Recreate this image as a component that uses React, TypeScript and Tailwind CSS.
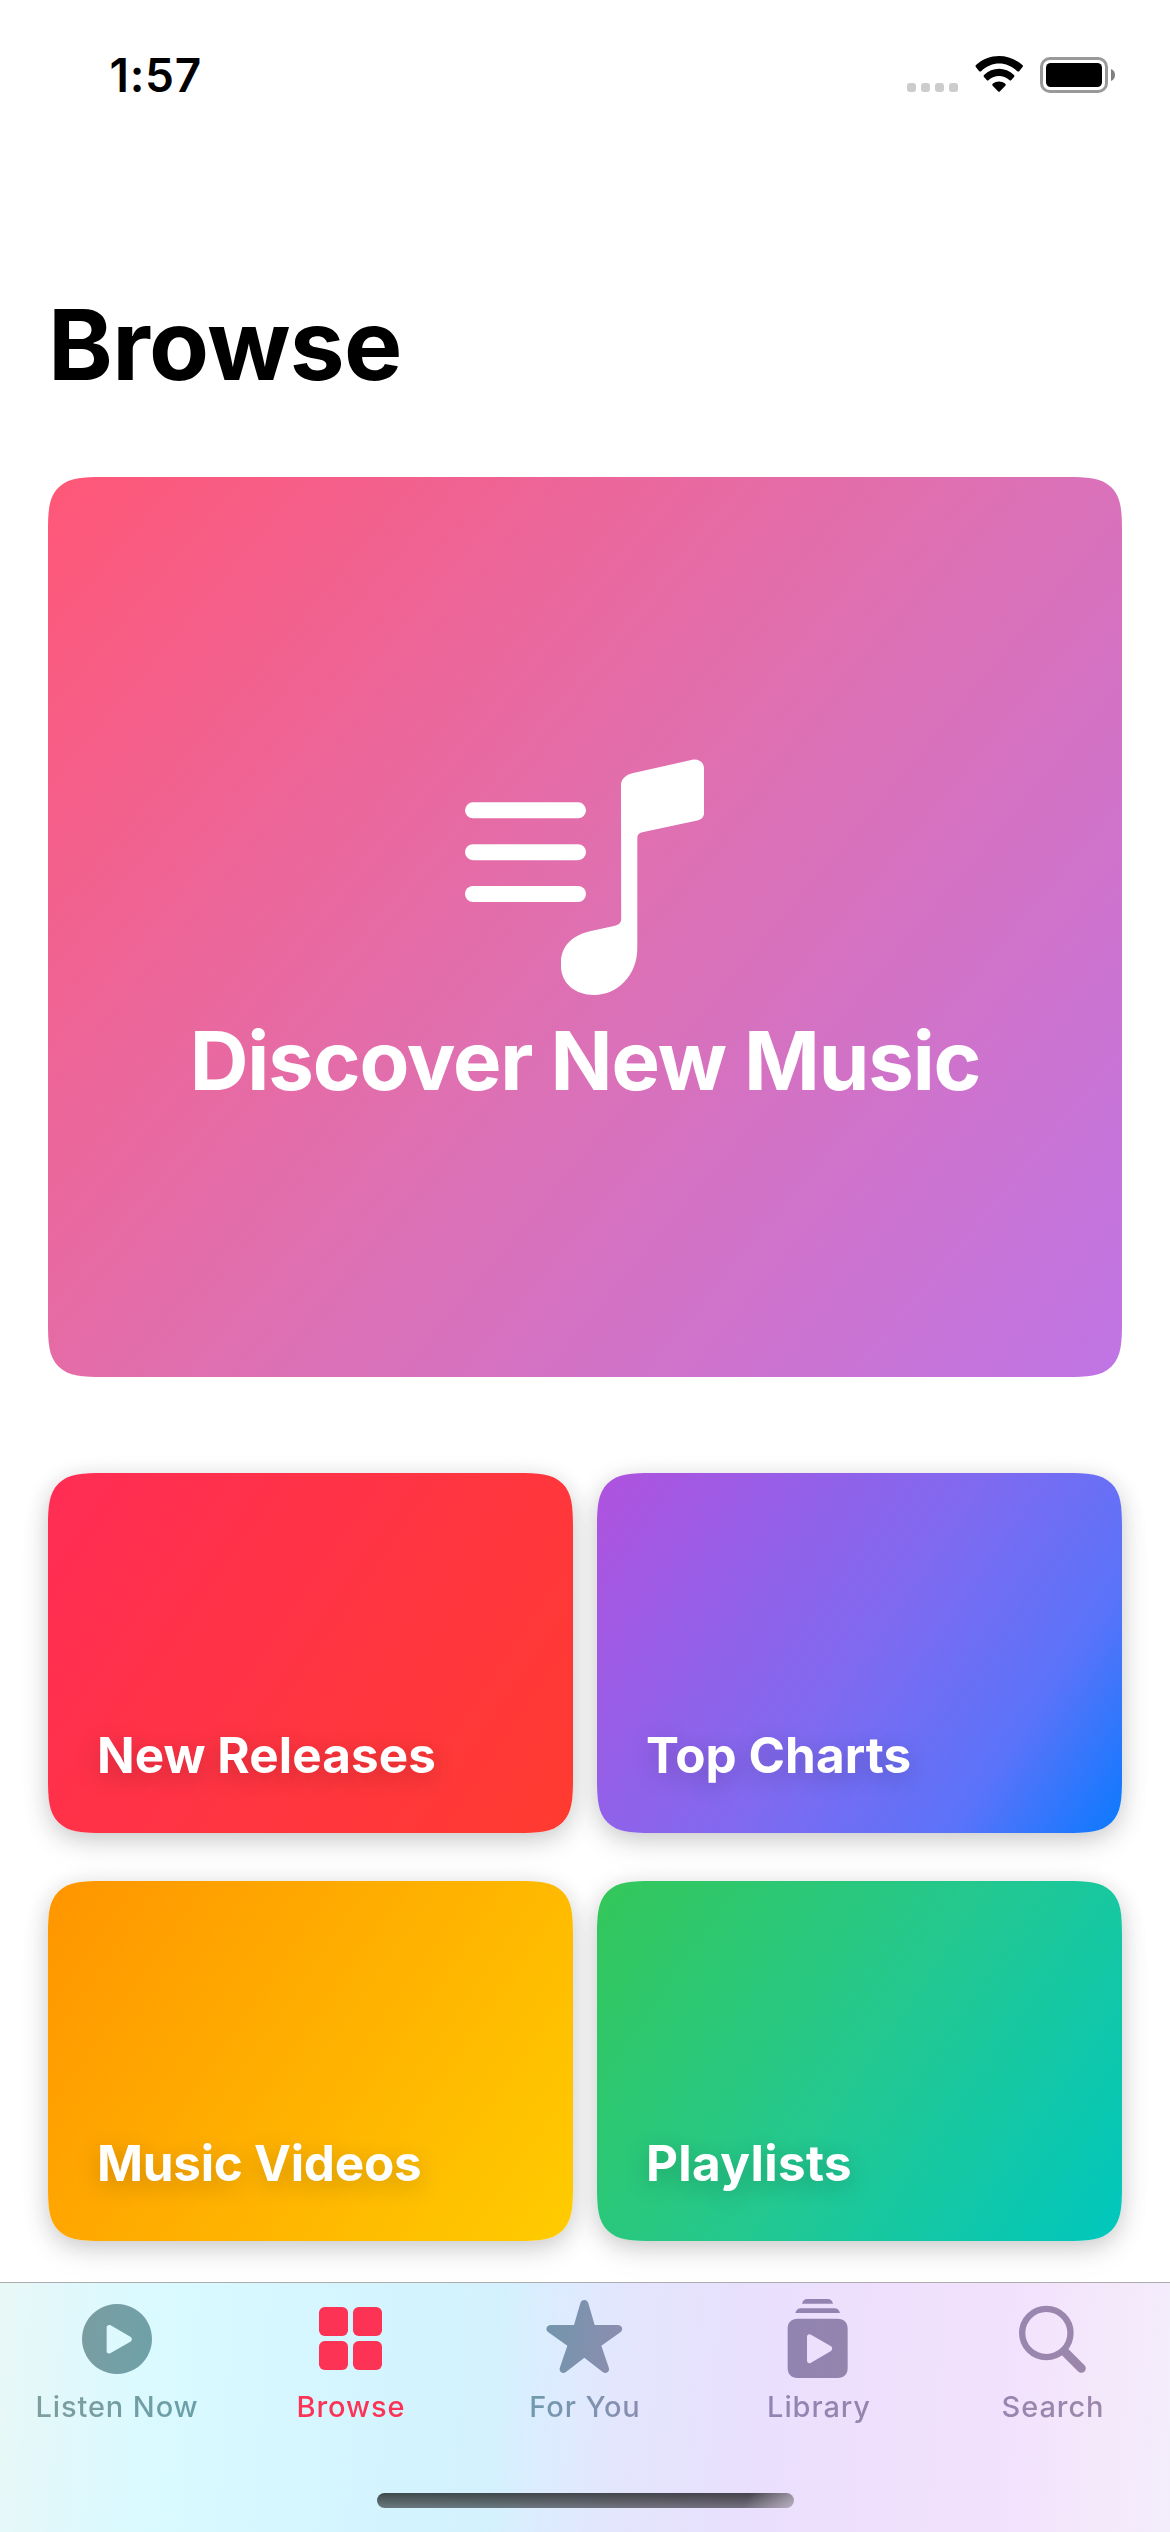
import React from "react";

const PLAY_TRIANGLE =
  "M320 202 C320 196 326 193 332 196 L391 230 C397 234 397 241 391 245 L332 279 C326 283 320 280 320 274 Z";

function StatusIcons() {
  return (
    <svg viewBox="81 75 624 111" className="h-[37px] w-[208px]">
      {[81, 123, 165, 207].map((x) => (
        <rect key={x} x={x} y={156} width={27} height={27} rx={9} fill="#cccccc" />
      ))}
      <path d="M288 109 Q285 105 288 102 C327 66 387 66 427 102 Q431 105 427 109 L418 120 Q415 123 411 120 C380 90 335 90 304 120 Q300 123 297 120 Z" />
      <path d="M312 138 Q309 135 312 132 C338 107 376 107 402 132 Q405 135 402 138 L394 147 Q391 150 388 147 C370 131 344 131 326 147 Q323 150 320 147 Z" />
      <path d="M338 164 Q335 161 338 158 C350 149 364 149 376 158 Q379 161 376 164 L360 181 Q357 184 354 181 Z" />
      <rect x={484.5} y={82.5} width={195} height={99} rx={25} fill="none" stroke="#999999" strokeWidth={9} />
      <rect x={498} y={96} width={168} height={72} rx={14} />
      <path d="M693 114 C709 119 709 145 693 150 Z" fill="#808080" />
    </svg>
  );
}

function MusicNoteList() {
  return (
    <svg viewBox="0 0 240 268" className="h-[268px] w-[240px]" fill="#ffffff">
      <rect x={0} y={59.3} width={121} height={16} rx={8} />
      <rect x={0} y={101.2} width={121} height={16} rx={8} />
      <rect x={0} y={143} width={121} height={16} rx={8} />
      <path d="M156 42 C156 35.5 161.5 31.5 168.3 30 L227.3 16.8 C233.5 15.4 239 19.5 239 25.5 V70.3 C239 74 236.3 76.6 232.3 77.4 L177.3 89.3 C174 90 172.3 91.8 172.3 95 V205.3 C172.3 232 153 252 129 252 C110 252 96 240 96 223 V219 C96 202 109 191 128.3 187.4 L150 182.7 C153.5 182 156.2 179.5 156.2 176 Z" />
    </svg>
  );
}

type Card = { title: string; background: string; tracking: string };

const cards: Card[] = [
  {
    title: "New Releases",
    background: "bg-[linear-gradient(124.44deg,#ff2d55,#ff3b30)]",
    tracking: "tracking-[0.07px]",
  },
  {
    title: "Top Charts",
    background: "bg-[linear-gradient(124.44deg,#af52de,#806af0_50%,#5a73f9_78%,#0a7aff)]",
    tracking: "tracking-[0.07px]",
  },
  {
    title: "Music Videos",
    background: "bg-[linear-gradient(124.44deg,#ff9500,#ffcc00)]",
    tracking: "tracking-[-0.25px]",
  },
  {
    title: "Playlists",
    background: "bg-[linear-gradient(124.44deg,#34c759,#24c88f_50%,#00c7be)]",
    tracking: "tracking-[0.35px]",
  },
];

type Tab = {
  label: string;
  minX: number;
  colors: [string, string];
  text: string;
  icon: React.ReactNode;
};

const tabs: Tab[] = [
  {
    label: "Listen Now",
    minX: 216,
    colors: ["#7a9da1", "#6fa1a8"],
    text: "bg-[linear-gradient(90deg,#7f9d9f,#6a9fa8)]",
    icon: (
      <path
        fillRule="evenodd"
        d={`M351 132 a105 105 0 1 0 0.01 0 Z ${PLAY_TRIANGLE}`}
      />
    ),
  },
  {
    label: "Browse",
    minX: 918,
    colors: ["#fc3355", "#fc3355"],
    text: "bg-[#fc3355]",
    icon: (
      <>
        <rect x={957} y={141} width={87} height={87} rx={17} />
        <rect x={1059} y={141} width={87} height={87} rx={17} />
        <rect x={957} y={243} width={87} height={87} rx={17} />
        <rect x={1059} y={243} width={87} height={87} rx={17} />
      </>
    ),
  },
  {
    label: "For You",
    minX: 420,
    colors: ["#7396ac", "#8b8daf"],
    text: "bg-[linear-gradient(90deg,#7199ad,#8a8db0)]",
    icon: (
      <path d="M541 130 C545 117 561 117 565 130 L584 195 H652 C668 195 671 210 661 217 L604 257 L626 322 C631 336 618 343 608 336 L553 293 L498 336 C488 343 475 336 480 322 L502 257 L445 217 C435 210 438 195 454 195 H522 Z" />
    ),
  },
  {
    label: "Library",
    minX: 12,
    colors: ["#9084b1", "#9484ae"],
    text: "bg-[linear-gradient(90deg,#9085b2,#9685ae)]",
    icon: (
      <>
        <path d="M96 131 C98 122 103 117 112 117 H173 C182 117 187 122 189 131 Z" />
        <path d="M76 159 C78 150 84 145 93 145 H193 C202 145 208 150 210 159 Z" />
        <path
          fillRule="evenodd"
          d="M83 176 H203 C222 176 233 187 233 206 V324 C233 343 222 354 203 354 H83 C64 354 53 343 53 324 V206 C53 187 64 176 83 176 Z M111 230 C111 224 117 220 123 224 L183 259 C188 262 188 269 183 273 L123 308 C117 312 111 308 111 302 Z"
        />
      </>
    ),
  },
  {
    label: "Search",
    minX: 714,
    colors: ["#9986b0", "#9c86ab"],
    text: "bg-[linear-gradient(90deg,#9986b0,#9c87aa)]",
    icon: (
      <g fill="none" stroke="url(#tab-Search)" strokeLinecap="round">
        <circle cx={829} cy={219} r={72.5} strokeWidth={19} />
        <path d="M886 277 L934 325" strokeWidth={27} />
      </g>
    ),
  },
];

function TabItem({ tab }: { tab: Tab }) {
  const id = `tab-${tab.label.replace(" ", "")}`;
  return (
    <div className="flex flex-1 flex-col items-center">
      <svg viewBox={`${tab.minX} 96 270 270`} className="h-[90px] w-[90px]" fill={`url(#${id})`}>
        <defs>
          <linearGradient
            id={id}
            gradientUnits="userSpaceOnUse"
            x1={tab.minX + 20}
            x2={tab.minX + 250}
            y1={150}
            y2={180}
          >
            <stop offset="0" stopColor={tab.colors[0]} />
            <stop offset="1" stopColor={tab.colors[1]} />
          </linearGradient>
        </defs>
        {tab.icon}
      </svg>
      <span
        className={`mt-[7px] bg-clip-text text-[29px] leading-[36px] font-medium tracking-[0.9px] text-transparent ${tab.text}`}
      >
        {tab.label}
      </span>
    </div>
  );
}

export default function App() {
  return (
    <div className="flex h-[2532px] w-[1170px] flex-col overflow-hidden bg-white font-['Inter',sans-serif] text-black">
      <header className="flex h-[149px] shrink-0 items-center justify-between pr-[55px] pl-[109.5px]">
        <span className="text-[46px] leading-none font-semibold tracking-[0.75px]">1:57</span>
        <StatusIcons />
      </header>

      <main className="flex flex-col px-12 pt-[136px]">
        <h1 className="text-[98px] leading-[120px] font-bold tracking-[-0.66px]">Browse</h1>

        <section className="mt-[72px] flex h-[900px] flex-col items-center justify-center rounded-[55px] bg-[linear-gradient(129.96deg,#ff5777,#df70b1_50%,#bf75e5)] [corner-shape:superellipse(1.71)]">
          <MusicNoteList />
          <h2 className="text-[81.4px] leading-[100px] font-bold tracking-[-1.12px] whitespace-nowrap text-white">
            Discover New Music
          </h2>
        </section>

        <section className="mt-24 grid grid-cols-2 gap-x-6 gap-y-12">
          {cards.map((card) => (
            <article
              key={card.title}
              className={`flex h-[360px] items-end rounded-[55px] p-12 pl-[49px] shadow-[0_6px_24px_rgba(0,0,0,0.2),0_15px_45px_rgba(0,0,0,0.03)] [corner-shape:superellipse(1.71)] ${card.background}`}
            >
              <h3
                className={`text-[49.4px] leading-[60px] font-bold text-white [text-shadow:0_6px_24px_rgba(0,0,0,0.2)] ${card.tracking}`}
              >
                {card.title}
              </h3>
            </article>
          ))}
        </section>
      </main>

      <nav className="relative mt-auto flex h-[250px] shrink-0 flex-col justify-between border-t border-[#adadad] bg-[linear-gradient(94deg,#e9f8f6_0%,#e2f8fb_5%,#dafaff_13%,#d6f7ff_25%,#d3f4fe_35%,#d3f1fe_42%,#deebfe_48%,#e4e5fd_54%,#e8e0fd_63%,#eee0fd_73%,#f2e1fd_85%,#f4e7fb_92%,#f3edfb_100%)] pt-[9px] pb-6">
        <div className="flex">
          {tabs.map((tab) => (
            <TabItem key={tab.label} tab={tab} />
          ))}
        </div>
        <div className="h-[15px] w-[417px] self-center rounded-full bg-[linear-gradient(115deg,transparent_88%,rgba(240,230,250,0.55)_100%),linear-gradient(180deg,rgba(0,0,0,0.7),rgba(0,0,0,0.5))]" />
      </nav>
    </div>
  );
}
